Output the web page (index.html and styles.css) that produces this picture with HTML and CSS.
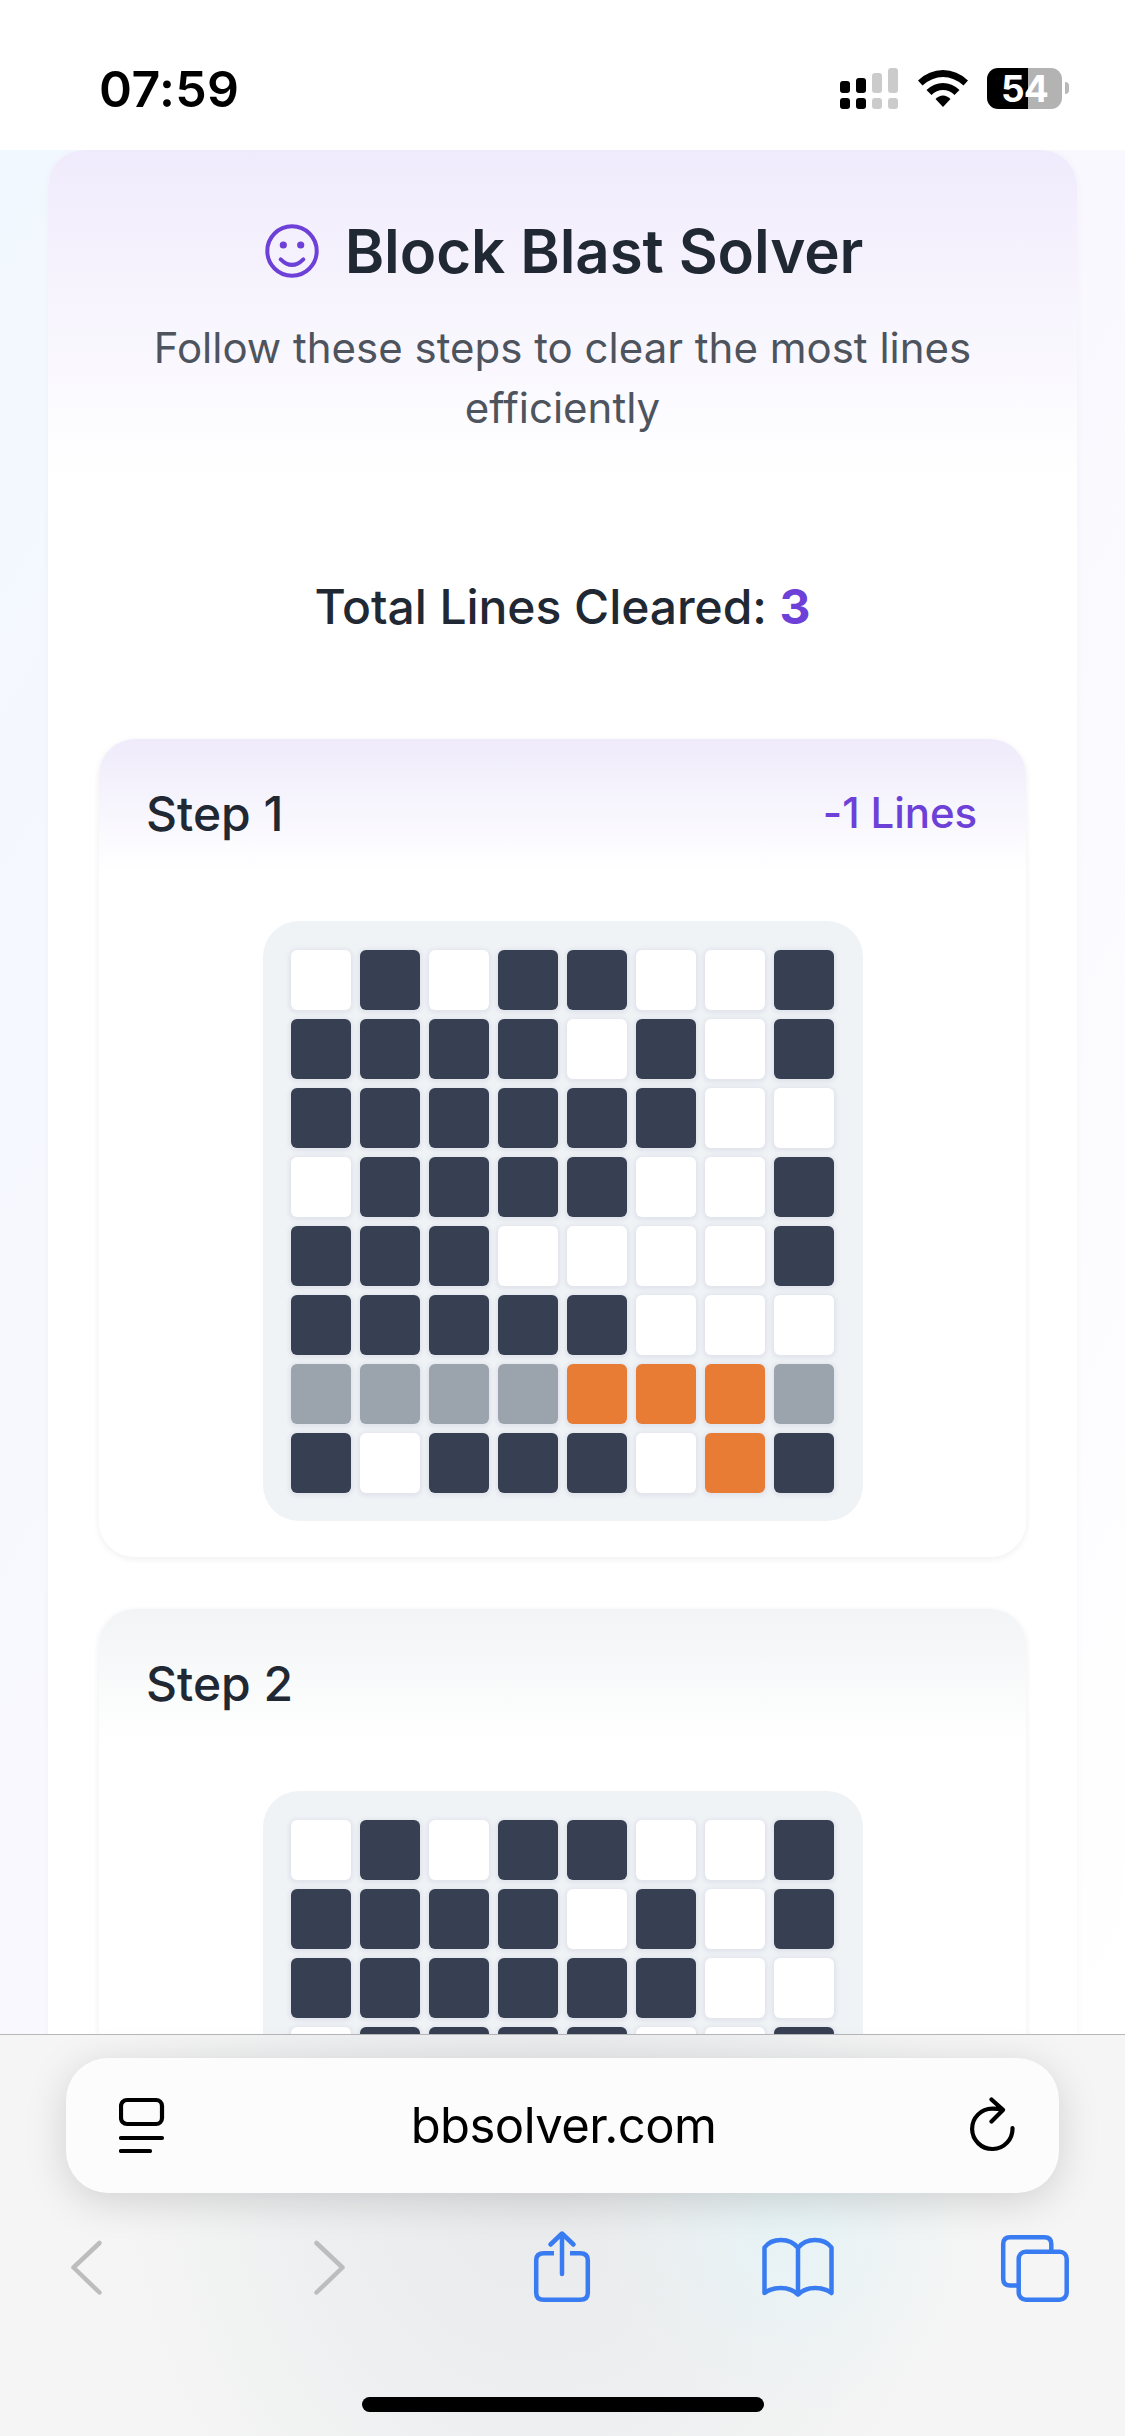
FILE: index.html
```html
<!DOCTYPE html>
<html lang="en">
<head>
<meta charset="utf-8">
<title>Block Blast Solver</title>
<link rel="stylesheet" href="styles.css">
</head>
<body>
<div class="screen">
  <header class="status">
    <span class="time">07:59</span>
    <div class="indicators">
      <svg class="signal" width="58" height="41" viewBox="0 0 58 41">
        <g fill="#000"><rect y="13" width="10" height="12" rx="3"/><rect y="30" width="10" height="11" rx="3"/><rect x="16" y="10" width="10" height="15" rx="3"/><rect x="16" y="30" width="10" height="11" rx="3"/></g>
        <g fill="#cbcbcb"><rect x="32" y="5" width="10" height="20" rx="3"/><rect x="32" y="30" width="10" height="11" rx="3"/><rect x="48" width="10" height="25" rx="3"/><rect x="48" y="30" width="10" height="11" rx="3"/></g>
      </svg>
      <svg class="wifi" width="50" height="41" viewBox="0 0 50 41">
        <path d="M0 12.500Q11 2 25 2Q39 2 50 12.500L45.500 17.500Q36 9 25 9Q14 9 4.500 17.500Z"/>
        <path d="M8.500 22Q16 15 25 15Q34 15 41.500 22L36.500 27Q31.500 22 25 22Q18.500 22 13.500 27Z"/>
        <path d="M17.500 31Q21 27.500 25 27.500Q29 27.500 32.500 31L25 39Z"/>
      </svg>
      <div class="battery"><span class="level">54</span><i class="nub"></i></div>
    </div>
  </header>

  <main class="page">
    <section class="panel">
      <div class="intro">
        <h1 class="title">
          <svg class="smile" width="54" height="54" viewBox="-27 -27 54 54">
            <circle r="24.700"/><path d="M-11.300 8.300Q0 19.500 11.300 8.300"/>
            <circle class="eye" cx="-8.700" cy="-6" r="3.600"/><circle class="eye" cx="8.700" cy="-6" r="3.600"/>
          </svg>
          <span>Block Blast Solver</span>
        </h1>
        <p class="lead">Follow these steps to clear the most lines efficiently</p>
      </div>
      <p class="total">Total Lines Cleared: <b>3</b></p>

      <div class="steps">
        <article class="step clears">
          <div class="step-head"><h2>Step 1</h2><span class="gain">-1 Lines</span></div>
          <div class="board">
            <i></i><i class="f"></i><i></i><i class="f"></i><i class="f"></i><i></i><i></i><i class="f"></i>
            <i class="f"></i><i class="f"></i><i class="f"></i><i class="f"></i><i></i><i class="f"></i><i></i><i class="f"></i>
            <i class="f"></i><i class="f"></i><i class="f"></i><i class="f"></i><i class="f"></i><i class="f"></i><i></i><i></i>
            <i></i><i class="f"></i><i class="f"></i><i class="f"></i><i class="f"></i><i></i><i></i><i class="f"></i>
            <i class="f"></i><i class="f"></i><i class="f"></i><i></i><i></i><i></i><i></i><i class="f"></i>
            <i class="f"></i><i class="f"></i><i class="f"></i><i class="f"></i><i class="f"></i><i></i><i></i><i></i>
            <i class="c"></i><i class="c"></i><i class="c"></i><i class="c"></i><i class="n"></i><i class="n"></i><i class="n"></i><i class="c"></i>
            <i class="f"></i><i></i><i class="f"></i><i class="f"></i><i class="f"></i><i></i><i class="n"></i><i class="f"></i>
          </div>
        </article>
        <article class="step">
          <div class="step-head"><h2>Step 2</h2></div>
          <div class="board">
            <i></i><i class="f"></i><i></i><i class="f"></i><i class="f"></i><i></i><i></i><i class="f"></i>
            <i class="f"></i><i class="f"></i><i class="f"></i><i class="f"></i><i></i><i class="f"></i><i></i><i class="f"></i>
            <i class="f"></i><i class="f"></i><i class="f"></i><i class="f"></i><i class="f"></i><i class="f"></i><i></i><i></i>
            <i></i><i class="f"></i><i class="f"></i><i class="f"></i><i class="f"></i><i></i><i></i><i class="f"></i>
          </div>
        </article>
      </div>
    </section>
  </main>

  <footer class="toolbar">
    <div class="address">
      <svg width="46" height="56" viewBox="0 0 46 56"><rect x="2" y="3" width="41" height="24" rx="6"/><path d="M2 41h41M2 54h29"/></svg>
      <span class="url">bbsolver.com</span>
      <svg width="46" height="56" viewBox="0 0 46 56"><path d="M43.500 31A20.200 20.200 0 1 1 23.300 11.600Q29 11.600 33.500 12.700M22.500 2.500L34 12.900L22.500 24.500"/></svg>
    </div>
    <nav class="actions">
      <svg class="off back" width="34" height="76" viewBox="0 0 34 76"><path d="M30.500 15L4.500 39.500L30.500 64.500"/></svg>
      <svg class="off forward" width="34" height="76" viewBox="0 0 34 76"><path d="M4.500 15L30.500 39.500L4.500 64.500"/></svg>
      <svg class="share" width="58" height="76" viewBox="0 0 58 76"><path class="butt" d="M21 25.200H11Q3.200 25.200 3.200 32V65Q3.200 71.800 11 71.800H47Q54.800 71.800 54.800 65V32Q54.800 25.200 47 25.200H37"/><path d="M29 46V6M17.500 16.500L29 5.500L40.500 16.500"/></svg>
      <svg class="book" width="74" height="76" viewBox="0 0 74 76"><path d="M37 20Q31 12 20 12Q9 12 3.500 19.500V65Q10 60 20 60Q30 60 37 66.500Q44 60 54 60Q64 60 70.500 65V19.500Q65 12 54 12Q43 12 37 20V66"/></svg>
      <svg width="70" height="76" viewBox="0 0 70 76"><path d="M17 57.500H10Q3.200 57.500 3.200 51V16Q3.200 9.200 10 9.200H44.500Q51.300 9.200 51.300 16V22.500"/><rect x="18.700" y="23.700" width="48" height="48" rx="7"/></svg>
    </nav>
    <div class="home"></div>
  </footer>
</div>
</body>
</html>
```
FILE: styles.css
```css
* { box-sizing: border-box; }
body { margin: 0; font-family: Inter, "Liberation Sans", sans-serif; color: #1f2833; }
h1, h2, p { margin: 0; }
svg { display: block; flex: none; }

.screen { width: 1125px; height: 2436px; display: flex; flex-direction: column; overflow: hidden; background: #fff; }

/* status bar */
.status { height: 150px; flex: none; display: flex; justify-content: space-between; align-items: flex-start; padding: 68px 56px 0 99px; }
.time { font-size: 50px; line-height: 42px; font-weight: 600; color: #000; letter-spacing: 0.4px; }
.indicators { display: flex; }
.wifi { margin: 0 19.500px; }
.battery { position: relative; width: 82px; height: 41px; }
.level { display: block; width: 75px; height: 41px; border-radius: 11px; background: linear-gradient(90deg, #000 41px, #b3b3b3 41px); color: #fff; font-size: 37px; line-height: 41px; font-weight: 700; text-align: center; letter-spacing: -0.8px; }
.nub { position: absolute; left: 78px; top: 14px; width: 4px; height: 12px; border-radius: 0 6px 6px 0; background: #b8b8b8; }

/* page */
.page { flex: 1; min-height: 0; overflow: hidden; padding: 0 48px; background: linear-gradient(to bottom right, #f2f8ff 0%, #f9f8fe 50%, #fff 100%); }
.panel { height: 2200px; border-radius: 36px 36px 0 0; background: #fff; box-shadow: 0 0 6px rgba(90, 80, 140, .05); overflow: hidden; }
.intro { height: 354px; padding: 65px 48px 0; background: linear-gradient(#f0ebfc, #fff 330px); text-align: center; }
.title { display: flex; justify-content: center; align-items: center; gap: 26px; padding-left: 3px; font-size: 60px; line-height: 72px; font-weight: 600; color: #1f2833; letter-spacing: -0.08px; }
.smile { fill: none; stroke: #6d40d8; stroke-width: 4; stroke-linecap: round; }
.smile .eye { fill: #6d40d8; stroke: none; }
.lead { margin-top: 31px; padding: 0 20px; font-size: 42px; line-height: 60px; color: #4e545e; }
.total { padding-top: 67px; font-size: 48px; line-height: 72px; font-weight: 500; text-align: center; letter-spacing: -0.06px; }
.total b { color: #6d40d8; font-weight: 700; }
.steps { padding: 96px 51px 0; display: flex; flex-direction: column; gap: 52px; }
.step { height: 818px; flex: none; border-radius: 36px; background: linear-gradient(#f2f4f5, #fff 135px); box-shadow: 0 2px 5px 2px rgba(0, 0, 0, .045); }
.step.clears { background: linear-gradient(#efebfb, #fff 135px); }
.step-head { height: 182px; padding: 38px 49px 0 47px; display: flex; justify-content: space-between; align-items: flex-start; }
.step h2 { font-size: 48px; line-height: 74px; font-weight: 500; }
.gain { font-size: 42px; line-height: 72px; font-weight: 500; color: #6d40d8; letter-spacing: -0.1px; }

.board { width: 600px; height: 600px; margin: 0 auto; padding: 29px 28px; border-radius: 36px; background: #eff3f6; display: grid; grid-template-columns: repeat(8, 60px); grid-auto-rows: 60px; gap: 9px; align-content: start; justify-content: center; }
.board i { border-radius: 6px; background: #fff; box-shadow: 0 1px 4px 2px rgba(60, 60, 120, .08); }
.board .f { background: #364052; }
.board .c { background: #9ba3ac; }
.board .n { background: #e87c35; }

/* browser toolbar */
.toolbar { height: 402px; flex: none; border-top: 1px solid #b7b7ba; padding: 23px 55px 0; display: flex; flex-direction: column; background: radial-gradient(circle at 790px 190px, rgba(226, 246, 249, .6), rgba(226, 246, 249, 0) 190px), radial-gradient(ellipse 420px 480px at 540px 130px, #e9eaec, #eeeff0 55%, #f5f5f5); }
.address { width: 993px; height: 135px; align-self: center; border-radius: 42px; background: #fcfcfd; box-shadow: 0 8px 42px rgba(0, 0, 0, .15); display: flex; align-items: center; justify-content: space-between; padding: 0 44px 0 53px; }
.address svg, .actions svg { fill: none; stroke: #000; stroke-width: 4.200; stroke-linecap: round; stroke-linejoin: round; }
.address svg { margin-top: -2px; }
.url { margin-right: 7px; font-size: 49px; line-height: 60px; color: #000; letter-spacing: -0.55px; }
.actions { margin-top: 35px; padding-left: 14px; display: flex; }
.actions svg { stroke: #397bf0; stroke-width: 4.500; }
.actions .off { stroke: #bdbdbe; }
.actions .back { margin-right: 209px; }
.actions .forward { margin-right: 187px; }
.actions .share { margin-right: 170px; }
.actions .book { margin-right: 165px; }
.actions .butt { stroke-linecap: butt; }
.home { width: 402px; height: 15px; margin: 93px auto 0; border-radius: 8px; background: #000; }
```
